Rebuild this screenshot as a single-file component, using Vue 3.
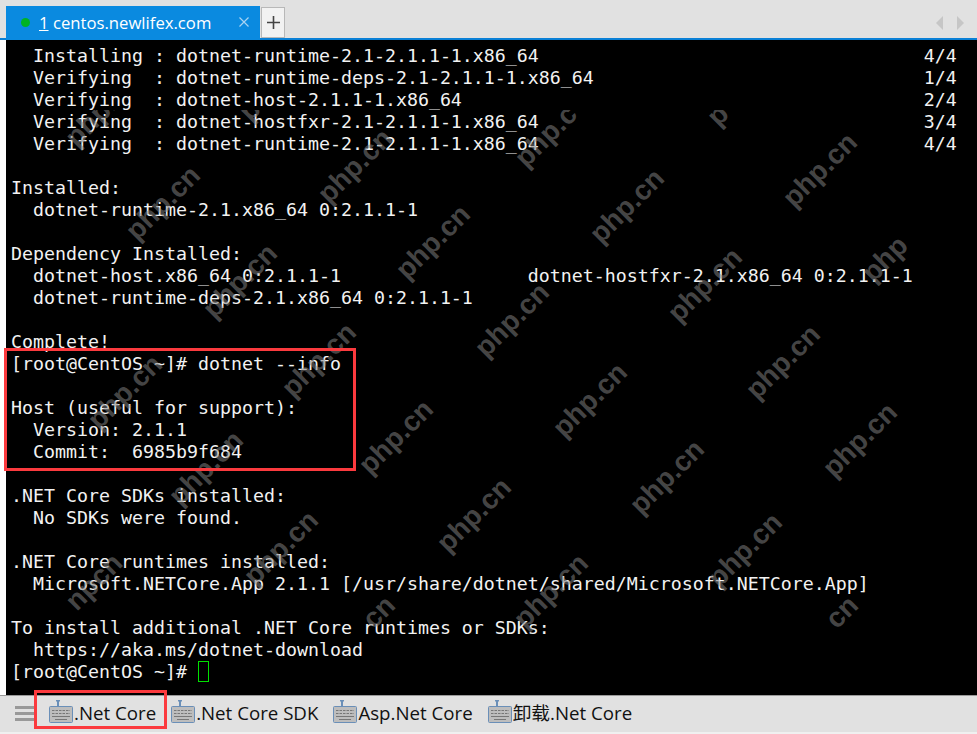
<script setup>
const pad = (s, n) => s.padEnd(n, ' ')
const lines = [
  pad('  Installing : dotnet-runtime-2.1-2.1.1-1.x86_64', 83) + '4/4',
  pad('  Verifying  : dotnet-runtime-deps-2.1-2.1.1-1.x86_64', 83) + '1/4',
  pad('  Verifying  : dotnet-host-2.1.1-1.x86_64', 83) + '2/4',
  pad('  Verifying  : dotnet-hostfxr-2.1-2.1.1-1.x86_64', 83) + '3/4',
  pad('  Verifying  : dotnet-runtime-2.1-2.1.1-1.x86_64', 83) + '4/4',
  '',
  'Installed:',
  '  dotnet-runtime-2.1.x86_64 0:2.1.1-1',
  '',
  'Dependency Installed:',
  pad('  dotnet-host.x86_64 0:2.1.1-1', 47) + 'dotnet-hostfxr-2.1.x86_64 0:2.1.1-1',
  '  dotnet-runtime-deps-2.1.x86_64 0:2.1.1-1',
  '',
  'Complete!',
  '[root@CentOS ~]# dotnet --info',
  '',
  'Host (useful for support):',
  '  Version: 2.1.1',
  '  Commit:  6985b9f684',
  '',
  '.NET Core SDKs installed:',
  '  No SDKs were found.',
  '',
  '.NET Core runtimes installed:',
  '  Microsoft.NETCore.App 2.1.1 [/usr/share/dotnet/shared/Microsoft.NETCore.App]',
  '',
  'To install additional .NET Core runtimes or SDKs:',
  '  https://aka.ms/dotnet-download',
]
const marks = [
  ['php.cn', 163, 203], ['php.cn', 355, 166], ['php.cn', 433, 242], ['php.cn', 240, 281],
  ['php.cn', 319, 360], ['php.cn', 125, 392], ['php.cn', 396, 437], ['php.cn', 206, 468],
  ['php.cn', 281, 548], ['php.cn', 474, 515], ['npcn', 94, 582], ['cn', 379, 612],
  ['php.cn', 590, 400], ['php.cn', 512, 320], ['php.cn', 783, 362], ['php.cn', 667, 477],
  ['php.cn', 860, 440], ['php.cn', 745, 550], ['php.cn', 551, 591], ['cn', 842, 612],
  ['php.cn', 627, 206], ['php.cn', 820, 170], ['php', 885, 259], ['php.cn', 705, 285],
  ['php.c', 546, 136], ['p', 718, 115], ['php.', 91, 121], ['p', 250, 110],
]
const tools = ['.Net Core', '.Net Core SDK', 'Asp.Net Core', '卸载.Net Core']
</script>

<template>
  <div class="window">
    <header class="tabbar">
      <div class="tab">
        <span class="dot"></span>
        <span class="title"><u>1</u> centos.newlifex.com</span>
        <svg class="close" width="10" height="10" viewBox="0 0 10 10">
          <path d="M.5.5l9 9M9.5.5l-9 9" stroke="#a9d3f2" stroke-width="1.2" fill="none" />
        </svg>
      </div>
      <div class="add">
        <svg width="13" height="13" viewBox="0 0 13 13">
          <path d="M6.5 0v13M0 6.5h13" stroke="#444" stroke-width="1.6" fill="none" />
        </svg>
      </div>
      <div class="arrows">
        <span class="arrow left"></span>
        <span class="arrow right"></span>
      </div>
    </header>

    <main class="body">
      <div class="term">
        <div v-for="(l, i) in lines" :key="i" class="row">{{ l }}</div>
        <div class="row">[root@CentOS ~]# <span class="cursor"></span></div>
      </div>
    </main>

    <footer class="tools">
      <div class="menu"><i></i><i></i><i></i></div>
      <div v-for="t in tools" :key="t" class="tool">
        <svg class="kbd" width="24" height="23" viewBox="0 0 24 23">
          <path d="M7 0h4v1.5h-1V6H8V1.5H7z" fill="#6a8fb8" />
          <rect x=".5" y="6.5" width="23" height="16" rx="1" fill="#bdbdbd" stroke="#6a8fb8" />
          <path d="M3 10.5h18M3 13.5h18" stroke="#777" stroke-dasharray="2.5 1" fill="none" />
          <path d="M3 16.5h18M6 19.5h12" stroke="#777" fill="none" />
        </svg>
        <span>{{ t }}</span>
      </div>
    </footer>

    <div class="marks">
      <span
        v-for="m in marks"
        :key="m[0] + m[1]"
        class="mark"
        :style="{ left: m[1] + 'px', top: m[2] + 'px' }"
      >{{ m[0] }}</span>
    </div>
    <div class="callout one"></div>
    <div class="callout two"></div>
  </div>
</template>

<style>
html, body { margin: 0; background: #fff; }
</style>

<style scoped>
.window {
  position: relative;
  width: 977px;
  height: 734px;
  display: flex;
  flex-direction: column;
  overflow: hidden;
  background: #fff;
}
.tabbar {
  height: 40px;
  box-sizing: border-box;
  padding: 6px 0 0 6px;
  display: flex;
  align-items: flex-start;
  background: #e1e1e1;
  border-bottom: 2px solid #0a80d6;
}
.tab {
  width: 254px;
  height: 34px;
  box-sizing: border-box;
  padding: 0 11px 2px 15px;
  display: flex;
  align-items: center;
  background: #0a8ae0;
  color: #fff;
  font-family: "Open Sans", "Noto Sans", sans-serif;
  font-size: 16.7px;
}
.dot {
  width: 9px;
  height: 9px;
  border-radius: 50%;
  background: #00b324;
  margin-right: 9px;
}
.title { flex: 1; white-space: nowrap; }
.add {
  width: 24px;
  height: 31px;
  margin: 1px 0 0 1px;
  box-sizing: border-box;
  display: flex;
  align-items: center;
  justify-content: center;
  background: #f2f2f2;
  border: 1px solid #b8b8b8;
}
.arrows {
  margin: 10px 13px 0 auto;
  display: flex;
  gap: 14px;
}
.arrow {
  width: 0;
  height: 0;
  border-top: 7px solid transparent;
  border-bottom: 7px solid transparent;
}
.arrow.left { border-right: 7px solid #c6c6c6; }
.arrow.right { border-left: 7px solid #c6c6c6; }

.body {
  flex: 1;
  min-height: 0;
  padding-left: 6px;
  display: flex;
}
.term {
  flex: 1;
  box-sizing: border-box;
  padding: 5px 0 0 5px;
  background: #000;
  color: #f2f2f2;
  font-family: "DejaVu Sans Mono", monospace;
  font-size: 18.27px;
}
.row {
  height: 22px;
  line-height: 22px;
  white-space: pre;
}
.cursor {
  display: inline-block;
  width: 11px;
  height: 21px;
  box-sizing: border-box;
  border: 1px solid #00e000;
  vertical-align: top;
}

.tools {
  height: 39px;
  box-sizing: border-box;
  padding: 0 0 2px 15px;
  display: flex;
  align-items: center;
  gap: 15px;
  background: #e1e1e1;
  border-top: 1px solid #999;
  border-bottom: 2px solid #f0f0f0;
  color: #111;
  font-family: "Open Sans", "Noto Sans", "Noto Sans CJK SC", sans-serif;
  font-size: 18.7px;
}
.menu {
  width: 19px;
  display: flex;
  flex-direction: column;
  gap: 3px;
}
.menu i {
  height: 3px;
  background: #999;
}
.tool {
  display: flex;
  align-items: center;
  gap: 1px;
  line-height: 24px;
  white-space: nowrap;
}
.kbd { margin-top: -3px; }

.marks {
  position: absolute;
  inset: 0;
  clip-path: inset(110px 0 0 0);
  pointer-events: none;
}
.mark {
  position: absolute;
  transform: translate(-50%, -50%) rotate(-45deg);
  color: rgba(128, 128, 128, 0.55);
  font-family: "Liberation Sans", sans-serif;
  font-weight: 700;
  font-size: 28px;
  line-height: 1;
  white-space: nowrap;
}
.callout {
  position: absolute;
  box-sizing: border-box;
  border: 3px solid #fb3a3e;
  pointer-events: none;
}
.callout.one { left: 4px; top: 348px; width: 352px; height: 123px; }
.callout.two { left: 34px; top: 690px; width: 133px; height: 39px; }
</style>
